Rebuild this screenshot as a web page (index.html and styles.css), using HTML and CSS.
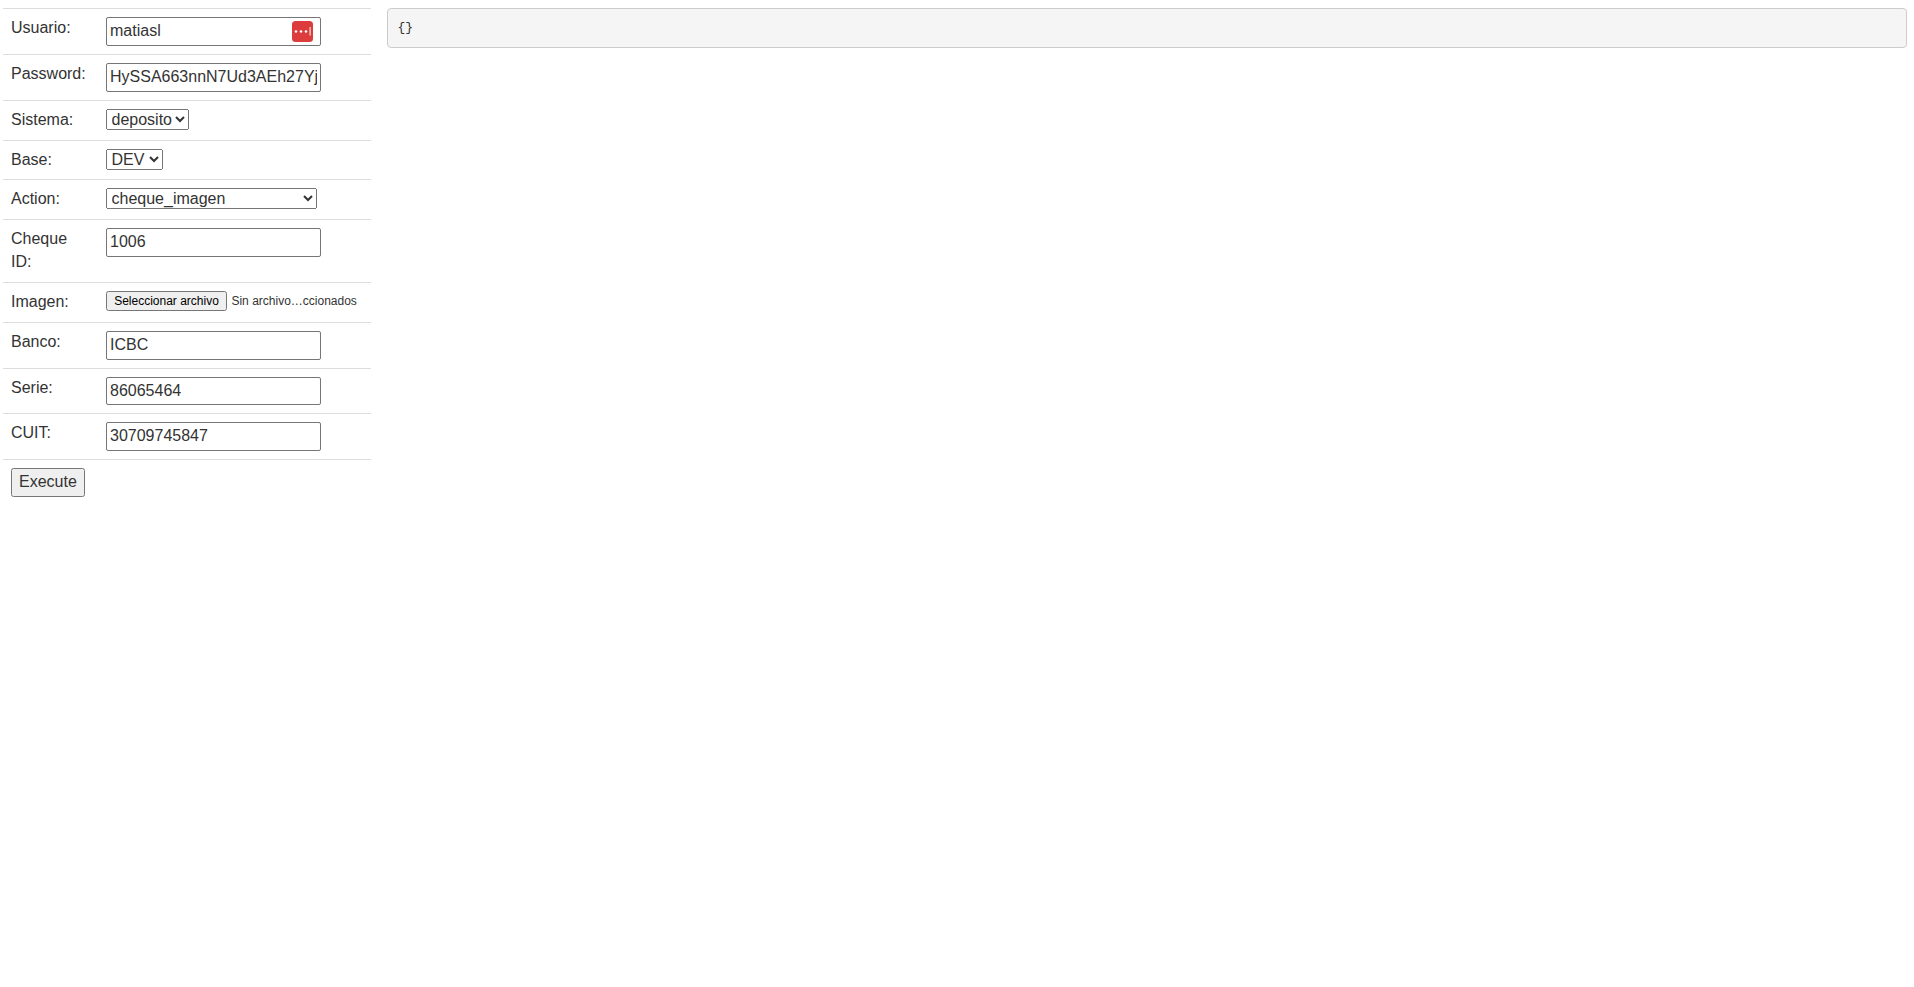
FILE: index.html
```html
<!DOCTYPE html>
<html lang="en">
<head>
    <meta charset="UTF-8">
    <meta name="viewport" content="width=device-width, initial-scale=1.0">
    <title>API Tester</title>
    <link rel="stylesheet" href="styles.css">
</head>
<body>
    <div class="page">
        <form class="api-form">
            <table class="form-table">
                <tr>
                    <td class="label-cell"><label for="usuario">Usuario:</label></td>
                    <td>
                        <span class="input-wrap">
                            <input type="text" id="usuario" value="matiasl">
                            <svg class="pass-icon" width="21" height="21" viewBox="0 0 21 21" aria-hidden="true">
                                <rect width="21" height="21" rx="3.5" fill="#dc3c3c"/>
                                <circle cx="4" cy="10.5" r="1.3" fill="#fff"/>
                                <circle cx="9" cy="10.5" r="1.3" fill="#fff"/>
                                <circle cx="14" cy="10.5" r="1.3" fill="#fff"/>
                                <rect x="17.6" y="6" width="1" height="8.5" fill="#fff"/>
                            </svg>
                        </span>
                    </td>
                </tr>
                <tr>
                    <td class="label-cell"><label for="password">Password:</label></td>
                    <td><input type="text" id="password" value="HySSA663nnN7Ud3AEh27YjK9"></td>
                </tr>
                <tr>
                    <td class="label-cell"><label for="sistema">Sistema:</label></td>
                    <td>
                        <select id="sistema" class="sistema-select">
                            <option>deposito</option>
                        </select>
                    </td>
                </tr>
                <tr>
                    <td class="label-cell"><label for="base">Base:</label></td>
                    <td>
                        <select id="base" class="base-select">
                            <option>DEV</option>
                        </select>
                    </td>
                </tr>
                <tr>
                    <td class="label-cell"><label for="action">Action:</label></td>
                    <td>
                        <select id="action" class="action-select">
                            <option>cheque_imagen</option>
                        </select>
                    </td>
                </tr>
                <tr>
                    <td class="label-cell"><label for="cheque">Cheque ID:</label></td>
                    <td><input type="text" id="cheque" value="1006"></td>
                </tr>
                <tr>
                    <td class="label-cell"><label>Imagen:</label></td>
                    <td class="file-cell">
                        <button type="button" class="file-button">Seleccionar archivo</button>
                        <span class="file-name">Sin archivo…ccionados</span>
                    </td>
                </tr>
                <tr>
                    <td class="label-cell"><label for="banco">Banco:</label></td>
                    <td><input type="text" id="banco" value="ICBC"></td>
                </tr>
                <tr>
                    <td class="label-cell"><label for="serie">Serie:</label></td>
                    <td><input type="text" id="serie" value="86065464"></td>
                </tr>
                <tr>
                    <td class="label-cell"><label for="cuit">CUIT:</label></td>
                    <td><input type="text" id="cuit" value="30709745847"></td>
                </tr>
                <tr>
                    <td colspan="2"><button type="button">Execute</button></td>
                </tr>
            </table>
        </form>
        <pre class="response">{}</pre>
    </div>
</body>
</html>
```

FILE: styles.css
```css
body {
    margin: 0;
    font-family: "Liberation Sans", Arial, sans-serif;
    font-size: 16px;
    line-height: 1.42857143;
    color: #333;
    background-color: #fff;
}
.page {
    display: grid;
    grid-template-columns: 368px 1fr;
    column-gap: 16px;
    align-items: start;
    padding: 8px 7px 0 3px;
}
.form-table {
    width: 368px;
    border-collapse: collapse;
    border-spacing: 0;
}
.form-table td {
    padding: 8px;
    border-top: 1px solid #ddd;
    vertical-align: top;
}
.form-table .label-cell {
    width: 79px;
}
input, select, button {
    font-family: inherit;
    font-size: inherit;
    line-height: inherit;
    color: inherit;
    margin: 0;
}
input[type="text"] {
    width: 215px;
    box-sizing: border-box;
    padding: 2px 3px;
    border: 1px solid #767676;
    border-radius: 2px;
}
.input-wrap {
    position: relative;
    display: inline-block;
}
.pass-icon {
    position: absolute;
    top: 4px;
    right: 8px;
}
select {
    padding-left: 0.5px;
}
.sistema-select {
    width: 83px;
}
.base-select {
    width: 57px;
}
.action-select {
    width: 211px;
}
.file-cell {
    white-space: nowrap;
}
.file-button {
    font-size: 12px;
    line-height: normal;
    color: #000;
    width: 121px;
    height: 20px;
    padding: 0;
    vertical-align: top;
}
.file-name {
    font-size: 12px;
    line-height: 20px;
    vertical-align: top;
}
.response {
    margin: 0;
    padding: 9.5px;
    font-family: "Liberation Mono", "Courier New", monospace;
    font-size: 13px;
    line-height: 1.42857143;
    color: #333;
    background-color: #f5f5f5;
    border: 1px solid #ccc;
    border-radius: 4px;
}
```
